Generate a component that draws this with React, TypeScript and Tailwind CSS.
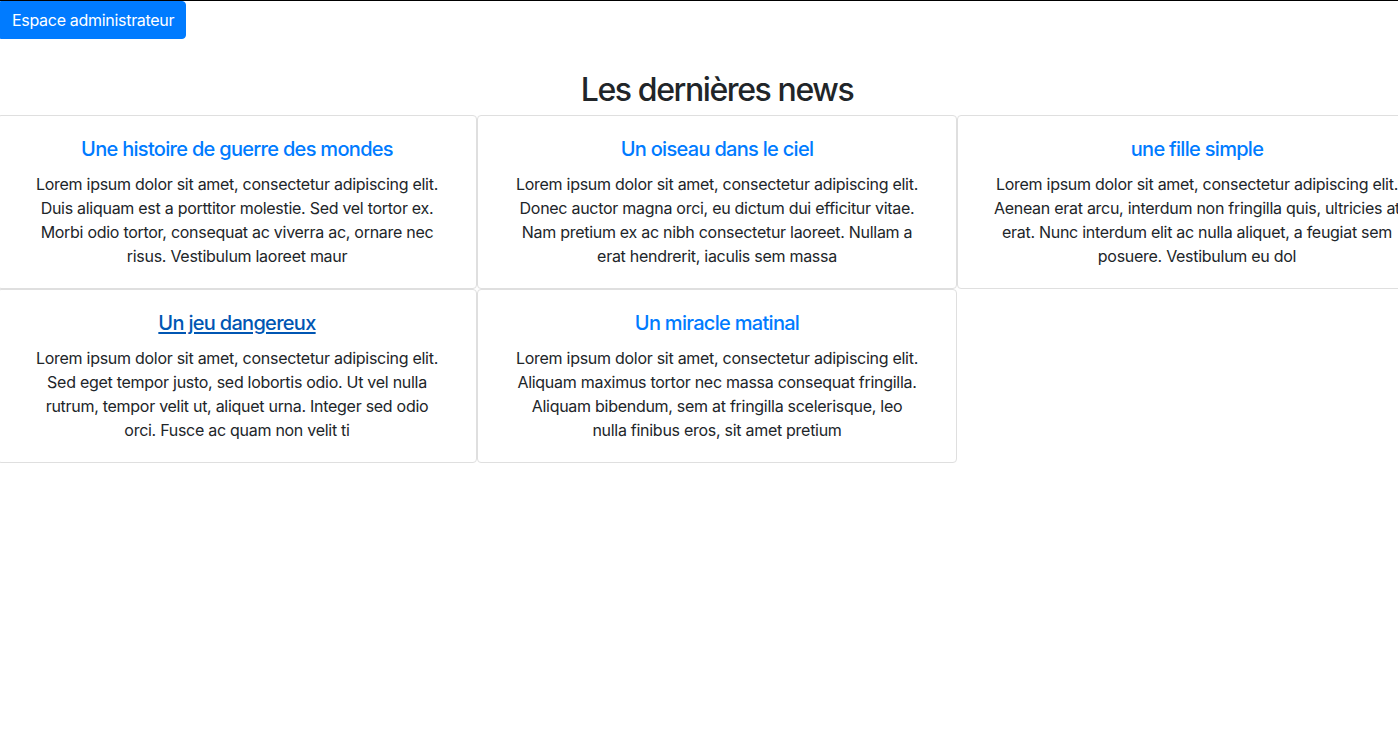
import React from "react";

type News = {
  title: string;
  body: string;
  hovered?: boolean;
};

const news: News[] = [
  {
    title: "Une histoire de guerre des mondes",
    body: "Lorem ipsum dolor sit amet, consectetur adipiscing elit. Duis aliquam est a porttitor molestie. Sed vel tortor ex. Morbi odio tortor, consequat ac viverra ac, ornare nec risus. Vestibulum laoreet maur"
  },
  {
    title: "Un oiseau dans le ciel",
    body: "Lorem ipsum dolor sit amet, consectetur adipiscing elit. Donec auctor magna orci, eu dictum dui efficitur vitae. Nam pretium ex ac nibh consectetur laoreet. Nullam a erat hendrerit, iaculis sem massa"
  },
  {
    title: "une fille simple",
    body: "Lorem ipsum dolor sit amet, consectetur adipiscing elit. Aenean erat arcu, interdum non fringilla quis, ultricies at erat. Nunc interdum elit ac nulla aliquet, a feugiat sem posuere. Vestibulum eu dol"
  },
  {
    title: "Un jeu dangereux",
    body: "Lorem ipsum dolor sit amet, consectetur adipiscing elit. Sed eget tempor justo, sed lobortis odio. Ut vel nulla rutrum, tempor velit ut, aliquet urna. Integer sed odio orci. Fusce ac quam non velit ti",
    hovered: true
  },
  {
    title: "Un miracle matinal",
    body: "Lorem ipsum dolor sit amet, consectetur adipiscing elit. Aliquam maximus tortor nec massa consequat fringilla. Aliquam bibendum, sem at fringilla scelerisque, leo nulla finibus eros, sit amet pretium"
  }
];

const App: React.FC = () => {
  return (
    <div
      className="min-h-screen bg-white border-t border-black overflow-hidden text-[#212529]"
      style={{ fontFamily: "Inter, 'Noto Sans', 'Liberation Sans', sans-serif" }}
    >
      <div className="flex">
        <button className="h-[38px] px-[11px] bg-[#007bff] text-white text-base leading-6 tracking-[-0.3px] rounded-r rounded-l-none border border-[#007bff]">
          Espace administrateur
        </button>
      </div>

      <div className="ml-[-3px] w-[1440px]">
        <h2 className="mt-[32px] mb-[6px] text-[32px] leading-[38px] font-medium tracking-[-1.4px] text-center">Les dernières news</h2>
        <div className="grid grid-cols-3 w-[1440px]">
          {news.map((n, i) => (
            <div key={i} className="border border-[#dfdfdf] rounded px-[35px] pt-[21px] pb-5 text-center">
              <a
                href="#"
                className={`block mb-[11px] text-xl leading-6 font-medium tracking-[-0.7px] ${n.hovered ? "text-[#0056b3] underline underline-offset-2" : "text-[#007bff]"}`}
              >
                {n.title}
              </a>
              <p className="text-base leading-6 tracking-[-0.28px]">{n.body}</p>
            </div>
          ))}
        </div>
      </div>
    </div>
  );
};

export default App;
